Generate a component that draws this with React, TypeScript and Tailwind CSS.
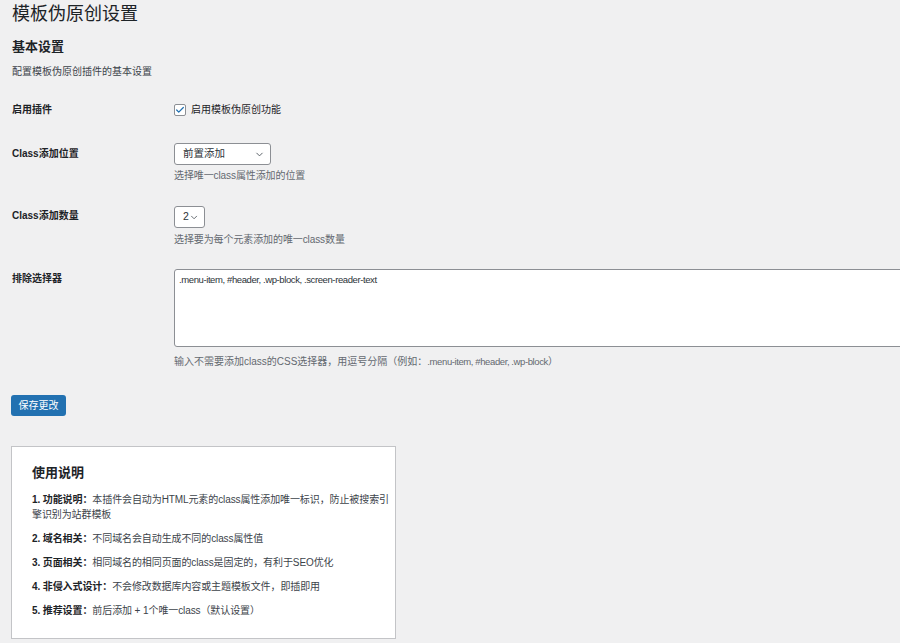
import { Check, ChevronDown } from 'lucide-react';

const font = { fontFamily: '"Segoe UI", "Liberation Sans", "Noto Sans CJK SC", sans-serif' };

const tips = [
  ['1. 功能说明：', '本插件会自动为HTML元素的class属性添加唯一标识，防止被搜索引擎识别为站群模板'],
  ['2. 域名相关：', '不同域名会自动生成不同的class属性值'],
  ['3. 页面相关：', '相同域名的相同页面的class是固定的，有利于SEO优化'],
  ['4. 非侵入式设计：', '不会修改数据库内容或主题模板文件，即插即用'],
  ['5. 推荐设置：', '前后添加 + 1个唯一class（默认设置）']
];

function Select({ value, width }: { value: string; width: string }) {
  return (
    <div className={`${width} h-[22px] flex items-center justify-between pl-[8px] pr-[5px] bg-white border border-[#8c8f94] rounded-[3px] text-[10.5px] text-[#2c3338]`}>
      <span>{value}</span>
      <ChevronDown size={11} strokeWidth={2} className="text-[#50575e]" />
    </div>
  );
}

export default function App() {
  return (
    <div style={font} className="min-h-screen w-full overflow-hidden bg-[#f0f0f1] text-[#1d2327] pl-[12px]">
      <h1 className="pt-[3px] text-[18px] leading-[22px] font-normal">模板伪原创设置</h1>
      <h2 className="mt-[13px] text-[13px] leading-[18px] font-bold">基本设置</h2>
      <p className="mt-[9px] text-[10px] leading-[14px] text-[#3c434a]">配置模板伪原创插件的基本设置</p>

      <div className="mt-[24px] flex">
        <div className="w-[162px] text-[10px] leading-[14px] font-bold">启用插件</div>
        <label className="flex items-center gap-[5px] text-[10px] leading-[14px]">
          <span className="w-[12px] h-[12px] flex items-center justify-center bg-white border border-[#8c8f94] rounded-[2px]">
            <Check size={10} strokeWidth={3} className="text-[#2271b1]" />
          </span>
          启用模板伪原创功能
        </label>
      </div>

      <div className="mt-[26px] flex">
        <div className="w-[162px] pt-[4px] text-[10px] leading-[14px] font-bold">Class添加位置</div>
        <div>
          <Select value="前置添加" width="w-[97px]" />
          <p className="mt-[4px] text-[10px] leading-[14px] text-[#646970] tracking-[-0.1px]">选择唯一class属性添加的位置</p>
        </div>
      </div>

      <div className="mt-[23px] flex">
        <div className="w-[162px] pt-[3px] text-[10px] leading-[14px] font-bold">Class添加数量</div>
        <div>
          <Select value="2" width="w-[31px]" />
          <p className="mt-[5px] text-[10px] leading-[14px] text-[#646970] tracking-[-0.1px]">选择要为每个元素添加的唯一class数量</p>
        </div>
      </div>

      <div className="mt-[22px] flex">
        <div className="w-[162px] shrink-0 pt-[3px] text-[10px] leading-[14px] font-bold">排除选择器</div>
        <div className="shrink-0">
          <div className="w-[760px] h-[78px] bg-white border border-[#8c8f94] rounded-[3px] px-[4px] pt-[3px] text-[9.5px] leading-[14px] tracking-[-0.4px] text-[#2c3338]">
            .menu-item, #header, .wp-block, .screen-reader-text
          </div>
          <p className="mt-[8px] text-[10px] leading-[14px] text-[#646970]">
            输入不需要添加class的CSS选择器，用逗号分隔（例如：
            <span className="text-[9.5px] tracking-[-0.4px]">.menu-item, #header, .wp-block</span>）
          </p>
        </div>
      </div>

      <button className="mt-[26px] -ml-[1px] h-[21px] w-[55px] rounded-[3px] bg-[#2271b1] text-white text-[10px] leading-[14px]">
        保存更改
      </button>

      <div className="mt-[30px] -ml-[1px] mb-[6px] w-[385px] bg-white border border-[#c3c4c7] pl-[20px] pr-[6px] pt-[17px] pb-[20px]">
        <h3 className="text-[13px] leading-[18px] font-bold">使用说明</h3>
        <div className="mt-[10px] flex flex-col gap-[9px] text-[10px] leading-[15px] text-[#3c434a] tracking-[-0.1px]">
          {tips.map(([k, v]) => (
            <p key={k}>
              <b className="text-[#1d2327]">{k}</b>
              {v}
            </p>
          ))}
        </div>
      </div>
    </div>
  );
}
